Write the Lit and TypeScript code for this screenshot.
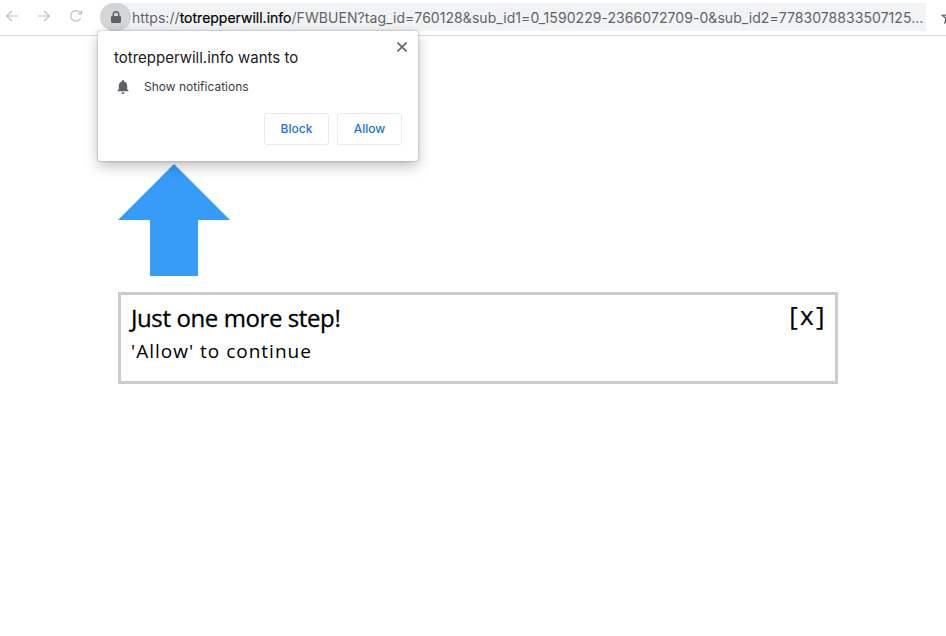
import { LitElement, html, css } from "lit";
import { customElement } from "lit/decorators.js";

@customElement("app-root")
export class AppRoot extends LitElement {
  static styles = css`
    :host { display: block; width: 946px; height: 636px; background: #fff; position: relative; overflow: hidden; font-family: Inter, "Liberation Sans", Arial, sans-serif; }
    .toolbar { height: 35px; border-bottom: 1px solid #dadce0; display: flex; align-items: flex-start; overflow: hidden; }
    .nav { width: 32px; height: 32px; display: flex; align-items: center; justify-content: center; flex: none; }
    .nav:first-child { margin-left: -4px; }
    .nav svg { display: block; }
    .omni { margin-left: 8px; margin-top: 3px; width: 826px; height: 28px; flex: none; background: #f1f3f4; border-radius: 14px 0 0 14px; display: flex; align-items: center; }
    .lock { width: 31px; height: 28px; flex: none; border-radius: 14px; background: #d3d5d7; display: flex; align-items: center; justify-content: center; }
    .url { margin-left: 1px; font-size: 14px; letter-spacing: 0.06px; color: #5f6368; white-space: nowrap; }
    .url b { font-weight: 400; color: #000; letter-spacing: 0; -webkit-text-stroke: 0.2px #000; }
    .star { margin: 9px 0 0 15px; flex: none; }
    .popup { position: absolute; left: 98px; top: 31px; width: 320px; height: 130px; box-sizing: border-box; background: #fff; border-radius: 3px; box-shadow: 0 0 2px rgba(0,0,0,.4), 0 5px 14px rgba(0,0,0,.25); padding: 18px 16px 16px; display: flex; flex-direction: column; }
    .close { position: absolute; left: 299px; top: 11px; display: block; }
    .ptitle { font-size: 15px; line-height: 18px; color: #202124; }
    .prow { display: flex; align-items: center; margin-top: 10px; height: 18px; }
    .prow svg { flex: none; margin-right: 13px; margin-left: 1px; margin-top: 1px; display: block; }
    .prow span { font-size: 12px; color: #3c4043; }
    .actions { display: flex; justify-content: flex-end; gap: 8px; margin-top: auto; }
    .btn { width: 65px; height: 32px; box-sizing: border-box; border: 1px solid #e8eaed; border-radius: 3px; background: #fff; color: #1a73e8; font-weight: 500; font-size: 12px; line-height: 30px; display: flex; align-items: flex-start; justify-content: center; }
    .main { margin-left: 118px; width: 720px; padding-top: 128px; font-family: "Open Sans", sans-serif; }
    .arrow { display: block; }
    .box { margin-top: 16px; height: 92px; box-sizing: border-box; border: 3px solid #ccc; padding: 6px 10px; display: flex; justify-content: space-between; color: #000; }
    h1 { margin: 0; font-size: 24px; line-height: 33px; font-weight: 400; letter-spacing: -0.4px; -webkit-text-stroke: 0.3px #000; }
    p { margin: 3px 0 0; font-size: 19px; line-height: 28px; letter-spacing: 1px; }
    .x { font-size: 26px; line-height: 28px; letter-spacing: 2.4px; margin-right: -2px; -webkit-text-stroke: 0.2px #000; }
  `;

  render() {
    return html`
      <div class="toolbar">
        <div class="nav"><svg width="14" height="14" viewBox="0 0 16 16" fill="none" stroke="#bdc1c6" stroke-width="1.4"><path d="M15 8H2M8 2 2 8l6 6"/></svg></div>
        <div class="nav"><svg width="14" height="14" viewBox="0 0 16 16" fill="none" stroke="#bdc1c6" stroke-width="1.4"><path d="M1 8h13M8 2l6 6-6 6"/></svg></div>
        <div class="nav"><svg width="14" height="14" viewBox="0 0 16 16" fill="none" stroke="#bdc1c6" stroke-width="1.4"><path d="M13.400 10.500A6 6 0 1 1 12.400 3.600L14 5.200"/><path d="M14.300 1.500v4h-4"/></svg></div>
        <div class="omni">
          <div class="lock"><svg width="10" height="12" viewBox="0 0 10 12"><path fill="#5f6368" d="M1.500 5V3.500a3.500 3.500 0 0 1 7 0V5h.5a1 1 0 0 1 1 1v5a1 1 0 0 1-1 1H1a1 1 0 0 1-1-1V6a1 1 0 0 1 1-1zM3 5h4V3.500a2 2 0 0 0-4 0z"/></svg></div>
          <div class="url">https://<b>totrepperwill.info</b>/FWBUEN?tag_id=760128&sub_id1=0_1590229-2366072709-0&sub_id2=7783078833507125...</div>
        </div>
        <svg class="star" width="16" height="16" viewBox="0 0 16 16" fill="none" stroke="#5f6368" stroke-width="1.4"><path d="M8 1.800 9.800 6l4.600.4-3.500 3 1 4.500L8 11.500 4 13.900l1-4.500-3.400-3L6.200 6z"/></svg>
      </div>

      <div class="main">
        <svg class="arrow" width="112" height="112" viewBox="0 0 112 112"><path fill="#369cf8" d="M56 0 112 56H80V112H32V56H0Z"/></svg>
        <div class="box">
          <div>
            <h1>Just one more step!</h1>
            <p>'Allow' to continue</p>
          </div>
          <div class="x">[x]</div>
        </div>
      </div>

      <div class="popup">
        <svg class="close" width="10" height="10" viewBox="0 0 10 10" stroke="#5f6368" stroke-width="1.6"><path d="M.5.5l9 9M9.500.5l-9 9"/></svg>
        <div class="ptitle">totrepperwill.info wants to</div>
        <div class="prow">
          <svg width="16" height="16" viewBox="0 0 16 16"><path fill="#5f6368" d="M8 1a1 1 0 0 1 1 1v.6c2 .5 3.200 2.200 3.200 4.400v3.200l1.300 1.300v.8h-11v-.8l1.300-1.300V7c0-2.200 1.200-3.900 3.200-4.400V2a1 1 0 0 1 1-1zM6.600 13.200h2.800A1.400 1.400 0 0 1 8 15a1.400 1.400 0 0 1-1.400-1.800z"/></svg>
          <span>Show notifications</span>
        </div>
        <div class="actions">
          <div class="btn">Block</div>
          <div class="btn">Allow</div>
        </div>
      </div>
    `;
  }
}
